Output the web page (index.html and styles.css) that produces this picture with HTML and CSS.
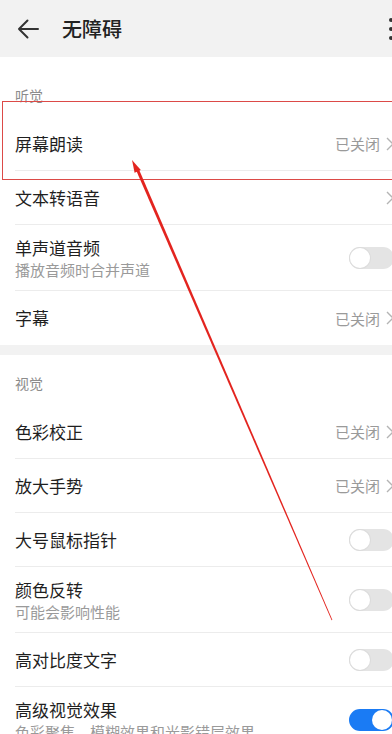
FILE: index.html
```html
<!DOCTYPE html>
<html lang="zh-CN">
<head>
<meta charset="utf-8">
<title>无障碍</title>
<link rel="stylesheet" href="styles.css">
</head>
<body>
<div class="page">
  <header class="topbar">
    <svg class="back" width="22" height="20" viewBox="0 0 22 20"><path d="M21 10H2M10.5 1.5L2 10l8.5 8.5" fill="none" stroke="#333" stroke-width="2" stroke-linecap="round" stroke-linejoin="round"/></svg>
    <h1 class="title">无障碍</h1>
    <svg class="more" width="6" height="24" viewBox="0 0 6 24"><circle cx="3" cy="3" r="2"/><circle cx="3" cy="12" r="2"/><circle cx="3" cy="21" r="2"/></svg>
  </header>

  <section class="group first">
    <div class="group-label">听觉</div>
    <div class="row">
      <div class="row-text"><div class="row-title">屏幕朗读</div></div>
      <div class="row-value">已关闭<svg class="chev" width="8" height="14" viewBox="0 0 8 14"><path d="M1 1l6 6-6 6" fill="none" stroke="#b4b4b4" stroke-width="1.4"/></svg></div>
    </div>
    <div class="row">
      <div class="row-text"><div class="row-title">文本转语音</div></div>
      <div class="row-value"><svg class="chev" width="8" height="14" viewBox="0 0 8 14"><path d="M1 1l6 6-6 6" fill="none" stroke="#b4b4b4" stroke-width="1.4"/></svg></div>
    </div>
    <div class="row tall">
      <div class="row-text"><div class="row-title">单声道音频</div><div class="row-sub">播放音频时合并声道</div></div>
      <div class="toggle"><span class="knob"></span></div>
    </div>
    <div class="row last">
      <div class="row-text"><div class="row-title">字幕</div></div>
      <div class="row-value">已关闭<svg class="chev" width="8" height="14" viewBox="0 0 8 14"><path d="M1 1l6 6-6 6" fill="none" stroke="#b4b4b4" stroke-width="1.4"/></svg></div>
    </div>
  </section>

  <div class="band"></div>

  <section class="group">
    <div class="group-label">视觉</div>
    <div class="row">
      <div class="row-text"><div class="row-title">色彩校正</div></div>
      <div class="row-value">已关闭<svg class="chev" width="8" height="14" viewBox="0 0 8 14"><path d="M1 1l6 6-6 6" fill="none" stroke="#b4b4b4" stroke-width="1.4"/></svg></div>
    </div>
    <div class="row">
      <div class="row-text"><div class="row-title">放大手势</div></div>
      <div class="row-value">已关闭<svg class="chev" width="8" height="14" viewBox="0 0 8 14"><path d="M1 1l6 6-6 6" fill="none" stroke="#b4b4b4" stroke-width="1.4"/></svg></div>
    </div>
    <div class="row">
      <div class="row-text"><div class="row-title">大号鼠标指针</div></div>
      <div class="toggle"><span class="knob"></span></div>
    </div>
    <div class="row tall">
      <div class="row-text"><div class="row-title">颜色反转</div><div class="row-sub">可能会影响性能</div></div>
      <div class="toggle"><span class="knob"></span></div>
    </div>
    <div class="row">
      <div class="row-text"><div class="row-title">高对比度文字</div></div>
      <div class="toggle"><span class="knob"></span></div>
    </div>
    <div class="row tall last">
      <div class="row-text"><div class="row-title">高级视觉效果</div><div class="row-sub">色彩聚焦，模糊效果和光影错层效果</div></div>
      <div class="toggle on"><span class="knob"></span></div>
    </div>
  </section>

  <div class="highlight"></div>
  <svg class="annot" width="392" height="734" viewBox="0 0 392 734">
    <polygon points="132,160 134.6,172.8 140.8,170.1" fill="#e3241f"/>
    <polygon points="136.2,170.4 138.9,169.2 332.4,620 331.6,620.3" fill="#e3241f"/>
  </svg>
</div>
</body>
</html>
```

FILE: styles.css
```css
html, body {
  margin: 0;
  padding: 0;
  width: 392px;
  height: 734px;
  overflow: hidden;
  background: #ffffff;
}

.page {
  position: relative;
  width: 400px;
  font-family: "Noto Sans CJK SC", "Noto Sans", sans-serif;
  color: #1f1f1f;
}

.topbar {
  height: 57px;
  background: #f2f2f2;
  display: flex;
  align-items: center;
  padding: 0 6px 0 17px;
  box-sizing: border-box;
}

.back {
  display: block;
  margin-top: 1px;
}

.title {
  margin: 0 0 0 23px;
  font-size: 20px;
  font-weight: 500;
  color: #222;
  line-height: 28px;
  flex: 1;
}

.more {
  display: block;
  fill: #333;
  margin-top: 0;
}

.group.first {
  padding-top: 10px;
}

.group-label {
  height: 50px;
  box-sizing: border-box;
  padding: 0 0 12px 15px;
  display: flex;
  align-items: flex-end;
  font-size: 14px;
  line-height: 20px;
  color: #8c8c8c;
}

.row {
  margin-left: 15px;
  padding-right: 6px;
  height: 54px;
  box-sizing: border-box;
  border-bottom: 1px solid #ececec;
  display: flex;
  align-items: center;
  justify-content: space-between;
}

.row.tall {
  height: 66px;
}

.row.last {
  border-bottom: none;
}

.row-title {
  font-size: 17px;
  line-height: 24px;
  color: #1f1f1f;
}

.row-sub {
  font-size: 15px;
  line-height: 20px;
  color: #9a9a9a;
}

.row-value {
  display: flex;
  align-items: center;
  gap: 6px;
  font-size: 15px;
  color: #9a9a9a;
}

.chev {
  display: block;
}

.band {
  height: 10px;
  background: #f2f2f2;
}

.toggle {
  width: 45px;
  height: 22px;
  border-radius: 11px;
  background: #e4e4e4;
  position: relative;
  flex: none;
}

.knob {
  position: absolute;
  top: 1px;
  left: 1px;
  width: 20px;
  height: 20px;
  border-radius: 50%;
  background: #fff;
  box-shadow: 0 0 0 1px #dcdcdc;
}

.toggle.on {
  background: #1a7bf4;
}

.toggle.on .knob {
  left: auto;
  right: 2px;
  box-shadow: none;
}

.highlight {
  position: absolute;
  left: 2px;
  top: 101px;
  width: 420px;
  height: 79px;
  border: 1px solid #dc4a47;
  box-sizing: border-box;
  pointer-events: none;
}

.annot {
  position: absolute;
  left: 0;
  top: 0;
  pointer-events: none;
}
```
